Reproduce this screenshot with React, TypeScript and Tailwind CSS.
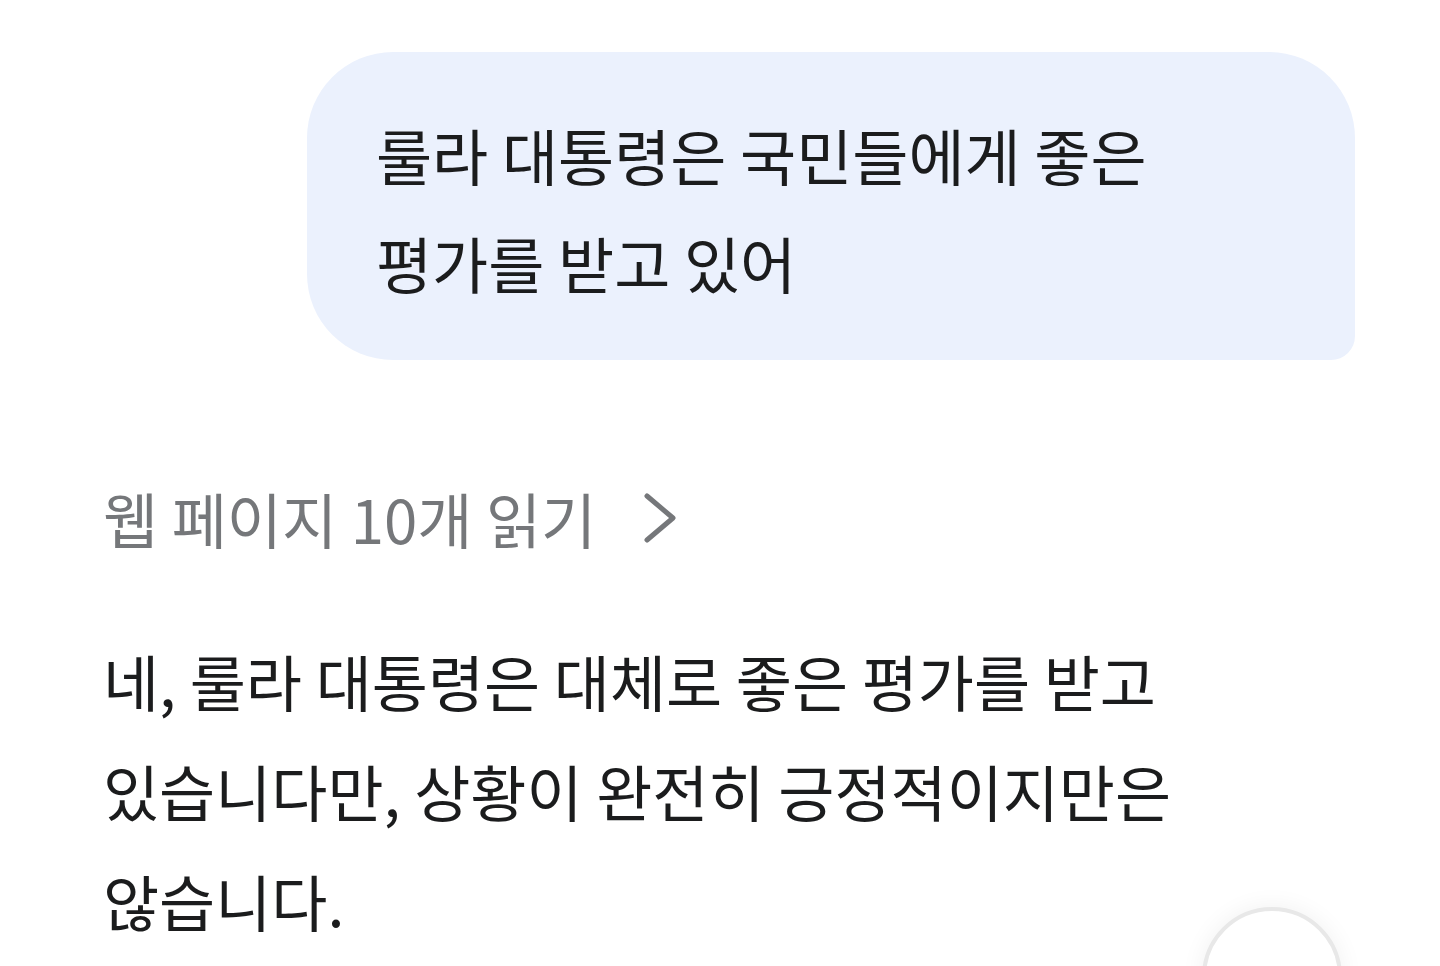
const fontStack = { fontFamily: '"Noto Sans CJK KR", "Noto Sans", sans-serif' };

function Chevron() {
  return (
    <svg width="40" height="56" viewBox="0 0 40 56" fill="none" className="shrink-0">
      <polyline
        points="7,6 33,28 7,50"
        stroke="currentColor"
        strokeWidth="5"
        strokeLinecap="round"
        strokeLinejoin="round"
      />
    </svg>
  );
}

export default function App() {
  return (
    <div className="relative h-[966px] w-[1440px] overflow-hidden bg-white" style={fontStack}>
      <div className="flex flex-col pl-[103px] pr-[85px] pt-[52px]">
        {/* User message */}
        <div className="ml-auto w-[1048px] rounded-[86px] rounded-br-[24px] bg-[#ebf1fd] pb-[43px] pl-[69px] pr-[40px] pt-[49px]">
          <p className="text-[61px] leading-[108px] text-[#1b1c1d]">
            룰라 대통령은 국민들에게 좋은
            <br />
            평가를 받고 있어
          </p>
        </div>

        {/* Sources */}
        <div className="mt-[126px] flex h-[64px] items-center text-[#75777a]">
          <span className="text-[60px] leading-[64px]">웹 페이지 10개 읽기</span>
          <span className="ml-[44px] flex items-center">
            <Chevron />
          </span>
        </div>

        {/* Answer */}
        <p className="mt-[76px] text-[61px] leading-[110px] text-[#1b1c1d]">
          네, 룰라 대통령은 대체로 좋은 평가를 받고
          <br />
          있습니다만, 상황이 완전히 긍정적이지만은
          <br />
          않습니다.
        </p>
      </div>

      {/* Scroll button */}
      <div className="absolute left-[1202px] top-[907px] h-[140px] w-[140px] rounded-full border-[4px] border-[#e8e8e8] bg-white shadow-[0_0_24px_rgba(0,0,0,0.06)]" />
    </div>
  );
}
